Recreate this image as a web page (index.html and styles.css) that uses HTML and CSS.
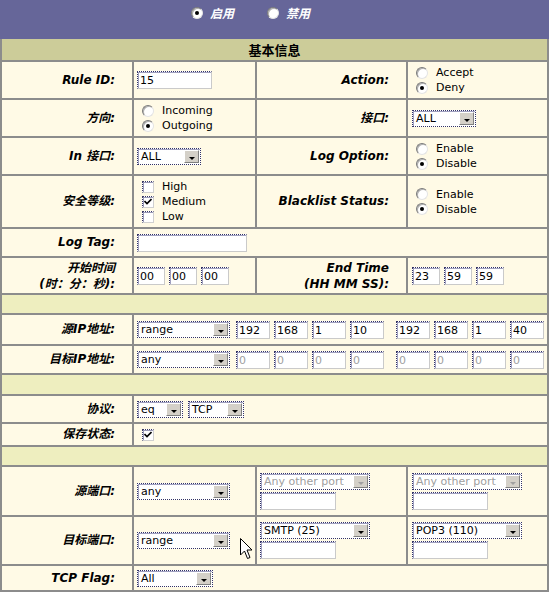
FILE: index.html
```html
<!DOCTYPE html>
<html lang="zh-CN">
<head>
<meta charset="utf-8">
<title>规则设置</title>
<link rel="stylesheet" href="styles.css">
</head>
<body>
<div class="topbar">
  <label class="top-opt"><span class="rd on"></span><span>启用</span></label>
  <label class="top-opt"><span class="rd"></span><span>禁用</span></label>
</div>
<table class="form">
  <colgroup><col class="c1"><col class="c2"><col class="c3"><col class="c4"></colgroup>
  <tr class="h-head"><th colspan="4">基本信息</th></tr>
  <tr class="h38">
    <td class="lbl">Rule ID:</td>
    <td class="val"><input class="inp w75" type="text" value="15"></td>
    <td class="lbl">Action:</td>
    <td class="val">
      <div class="opt"><span class="rd"></span>Accept</div>
      <div class="opt"><span class="rd on"></span>Deny</div>
    </td>
  </tr>
  <tr class="h38">
    <td class="lbl">方向:</td>
    <td class="val">
      <div class="opt"><span class="rd"></span>Incoming</div>
      <div class="opt"><span class="rd on"></span>Outgoing</div>
    </td>
    <td class="lbl">接口:</td>
    <td class="val"><span class="sel w64 ml"><span class="txt">ALL</span><span class="btn"></span></span></td>
  </tr>
  <tr class="h38">
    <td class="lbl">In 接口:</td>
    <td class="val"><span class="sel w64"><span class="txt">ALL</span><span class="btn"></span></span></td>
    <td class="lbl">Log Option:</td>
    <td class="val">
      <div class="opt"><span class="rd"></span>Enable</div>
      <div class="opt"><span class="rd on"></span>Disable</div>
    </td>
  </tr>
  <tr class="h53">
    <td class="lbl">安全等级:</td>
    <td class="val">
      <div class="opt"><span class="cb"></span>High</div>
      <div class="opt"><span class="cb"><svg viewBox="0 0 8 7" width="8" height="7"><path d="M0.5 3 L3 5.5 L7.5 1" fill="none" stroke="#000" stroke-width="1.6"/></svg></span>Medium</div>
      <div class="opt"><span class="cb"></span>Low</div>
    </td>
    <td class="lbl">Blacklist Status:</td>
    <td class="val">
      <div class="opt"><span class="rd"></span>Enable</div>
      <div class="opt"><span class="rd on"></span>Disable</div>
    </td>
  </tr>
  <tr class="h29">
    <td class="lbl">Log Tag:</td>
    <td class="val" colspan="3"><input class="inp w110" type="text" value=""></td>
  </tr>
  <tr class="h37">
    <td class="lbl two">开始时间<br>(时：分：秒):</td>
    <td class="val"><div class="row"><input class="inp w28" type="text" value="00"><input class="inp w28" type="text" value="00"><input class="inp w28" type="text" value="00"></div></td>
    <td class="lbl two">End Time<br>(HH MM SS):</td>
    <td class="val"><div class="row ml"><input class="inp w28" type="text" value="23"><input class="inp w28" type="text" value="59"><input class="inp w28" type="text" value="59"></div></td>
  </tr>
  <tr class="h20 sep"><td colspan="4"></td></tr>
  <tr class="h31">
    <td class="lbl">源IP地址:</td>
    <td class="val" colspan="3">
      <div class="row ip">
        <span class="sel w95"><span class="txt">range</span><span class="btn"></span></span>
        <div class="quad"><input class="inp w34" type="text" value="192"><input class="inp w34" type="text" value="168"><input class="inp w34" type="text" value="1"><input class="inp w34" type="text" value="10"></div>
        <div class="quad"><input class="inp w34" type="text" value="192"><input class="inp w34" type="text" value="168"><input class="inp w34" type="text" value="1"><input class="inp w34" type="text" value="40"></div>
      </div>
    </td>
  </tr>
  <tr class="h29">
    <td class="lbl">目标IP地址:</td>
    <td class="val" colspan="3">
      <div class="row ip">
        <span class="sel w95"><span class="txt">any</span><span class="btn"></span></span>
        <div class="quad"><input class="inp w34" type="text" value="0" disabled><input class="inp w34" type="text" value="0" disabled><input class="inp w34" type="text" value="0" disabled><input class="inp w34" type="text" value="0" disabled></div>
        <div class="quad"><input class="inp w34" type="text" value="0" disabled><input class="inp w34" type="text" value="0" disabled><input class="inp w34" type="text" value="0" disabled><input class="inp w34" type="text" value="0" disabled></div>
      </div>
    </td>
  </tr>
  <tr class="h21 sep"><td colspan="4"></td></tr>
  <tr class="h28">
    <td class="lbl">协议:</td>
    <td class="val" colspan="3">
      <div class="row proto">
        <span class="sel w46"><span class="txt">eq</span><span class="btn"></span></span>
        <span class="sel w56"><span class="txt">TCP</span><span class="btn"></span></span>
      </div>
    </td>
  </tr>
  <tr class="h23">
    <td class="lbl">保存状态:</td>
    <td class="val" colspan="3"><div class="opt"><span class="cb"><svg viewBox="0 0 8 7" width="8" height="7"><path d="M0.5 3 L3 5.5 L7.5 1" fill="none" stroke="#000" stroke-width="1.6"/></svg></span></div></td>
  </tr>
  <tr class="h20 sep"><td colspan="4"></td></tr>
  <tr class="h50">
    <td class="lbl">源端口:</td>
    <td class="val"><span class="sel w93"><span class="txt">any</span><span class="btn"></span></span></td>
    <td class="val">
      <div class="stack">
        <span class="sel w110 dis"><span class="txt">Any other port</span><span class="btn"></span></span>
        <input class="inp w76" type="text" value="">
      </div>
    </td>
    <td class="val">
      <div class="stack ml">
        <span class="sel w110 dis"><span class="txt">Any other port</span><span class="btn"></span></span>
        <input class="inp w76" type="text" value="">
      </div>
    </td>
  </tr>
  <tr class="h49">
    <td class="lbl">目标端口:</td>
    <td class="val"><span class="sel w93"><span class="txt">range</span><span class="btn"></span></span></td>
    <td class="val">
      <div class="stack">
        <span class="sel w110"><span class="txt">SMTP (25)</span><span class="btn"></span></span>
        <input class="inp w76" type="text" value="">
      </div>
    </td>
    <td class="val">
      <div class="stack ml">
        <span class="sel w110"><span class="txt">POP3 (110)</span><span class="btn"></span></span>
        <input class="inp w76" type="text" value="">
      </div>
    </td>
  </tr>
  <tr class="h26">
    <td class="lbl">TCP Flag:</td>
    <td class="val" colspan="3"><span class="sel w76"><span class="txt">All</span><span class="btn"></span></span></td>
  </tr>
</table>
<svg class="cursor" width="13" height="22" viewBox="0 0 13 22"><path d="M0.5 0.5 L0.5 17 L4.5 13 L7.5 20.5 L10 19.5 L7 12 L12 12 Z" fill="#fff" stroke="#000" stroke-width="1"/></svg>
</body>
</html>
```

FILE: styles.css
```css
* { box-sizing: border-box; }
html, body { margin: 0; padding: 0; }
body {
  position: relative;
  width: 549px;
  background: #fff;
  color: #000;
  font-family: "DejaVu Sans", Verdana, "Noto Sans CJK SC", sans-serif;
  font-size: 11px;
}

/* top bar */
.topbar {
  height: 39px;
  background: #666699;
  display: flex;
  align-items: flex-start;
  gap: 33px;
  padding: 6px 0 0 191px;
}
.top-opt {
  display: flex;
  align-items: center;
  gap: 7px;
  color: #fff;
  font: italic bold 12px "Noto Sans CJK SC", sans-serif;
  line-height: 14px;
}

/* table */
.form {
  width: 549px;
  table-layout: fixed;
  border-collapse: separate;
  border-spacing: 0;
  border-left: 2px solid #8c8c8c;
}
.c1 { width: 132px; }
.c2 { width: 123px; }
.c3 { width: 151px; }
.c4 { width: 141px; }

.form th, .form td {
  border-right: 2px solid #8c8c8c;
  border-bottom: 2px solid #8c8c8c;
  background: #fffae6;
  padding: 0 3px;
  vertical-align: middle;
}
.form th {
  background: #cccc99;
  font: bold 13px "Noto Sans CJK SC", sans-serif;
  text-align: center;
  line-height: 15px;
}
.form tr.sep td { background: #eeeebf; }

.h-head > * { height: 23px; }
.h38 > * { height: 38px; }
.h53 > * { height: 53px; }
.h30 > * { height: 30px; }
.h37 > * { height: 37px; }
.h20 > * { height: 20px; }
.h21 > * { height: 21px; }
.h31 > * { height: 31px; }
.h29 > * { height: 29px; }
.h28 > * { height: 28px; }
.h23 > * { height: 23px; }
.h50 > * { height: 50px; }
.h49 > * { height: 49px; }
.h26 > * { height: 26px; }

.form td.lbl {
  text-align: right;
  padding-right: 17px;
  font-family: "DejaVu Sans", Verdana, "Noto Sans CJK SC", sans-serif;
  font-size: 12px;
  font-weight: bold;
  font-style: italic;
  line-height: 15px;
  white-space: nowrap;
}
.form td.lbl.two { line-height: 16px; }

.ml { margin-left: 1px; }

/* options */
.opt {
  display: flex;
  align-items: center;
  height: 15px;
  padding-left: 5px;
  line-height: 15px;
}
.rd {
  position: relative;
  display: inline-block;
  flex: none;
  width: 12px;
  height: 12px;
  border-radius: 50%;
  background: #fff;
  border: 1px solid;
  border-color: #7a7a7a #e4e4e4 #e4e4e4 #7a7a7a;
  box-shadow: inset 1px 1px 0 #b0b0b0;
}
.opt .rd { margin-right: 8px; }
.rd.on::after {
  content: "";
  position: absolute;
  left: 3px;
  top: 3px;
  width: 4px;
  height: 4px;
  border-radius: 50%;
  background: #000;
}
.cb {
  display: inline-flex;
  align-items: center;
  justify-content: center;
  flex: none;
  width: 12px;
  height: 12px;
  margin-right: 8px;
  background: #fff;
  border: 1px solid;
  border-style: dotted solid solid dotted;
  border-color: #3a3a66 #d0d0d0 #d0d0d0 #3a3a66;
  box-shadow: inset 1px 1px 0 #9a9ab8;
}
.cb svg { display: block; }

/* inputs */
.inp {
  display: block;
  height: 18px;
  margin: 0;
  padding: 1px 2px 0;
  background: #fff;
  color: #000;
  font: 11px "DejaVu Sans", Verdana, sans-serif;
  border: 1px solid;
  border-style: dotted solid solid dotted;
  border-color: #333366 #cacaca #cacaca #333366;
  box-shadow: inset 1px 1px 0 #a0a0c0;
  outline: none;
  border-radius: 0;
}
.inp:disabled { color: #a0a0a0; background: #fff; }
.w28 { width: 28px; }
.w34 { width: 34px; }
.w46 { width: 46px; }
.w56 { width: 56px; }
.w64 { width: 64px; }
.w75 { width: 75px; }
.w76 { width: 76px; }
.w93 { width: 93px; }
.w95 { width: 95px; }
.w110 { width: 110px; }

/* select look-alike */
.sel {
  display: inline-flex;
  align-items: stretch;
  height: 17px;
  vertical-align: middle;
  background: #fff;
  border: 1px dotted #333366;
  box-shadow: inset 1px 1px 0 #a0a0c0;
  font: 11px "DejaVu Sans", Verdana, sans-serif;
  line-height: 15px;
}
.sel .txt {
  flex: 1;
  min-width: 0;
  padding-left: 3px;
  white-space: nowrap;
  overflow: hidden;
}
.sel .btn {
  position: relative;
  flex: none;
  width: 15px;
  margin: 1px;
  background: #d4d0c8;
  border: 1px solid;
  border-color: #ffffff #808080 #808080 #ffffff;
}
.sel .btn::after {
  content: "";
  position: absolute;
  left: 4px;
  top: 6px;
  border-left: 3px solid transparent;
  border-right: 3px solid transparent;
  border-top: 3px solid #000;
}
.sel.dis { color: #a0a0a0; }
.sel.dis .btn::after { border-top-color: #a0a0a0; }

/* rows of controls */
.row { display: flex; align-items: center; gap: 4px; }
.row.ip { gap: 6px; }
.quad { display: flex; gap: 4px; }
.quad + .quad { margin-left: 6px; }
.row.proto { gap: 5px; }
.stack { display: flex; flex-direction: column; gap: 2px; }

.cursor {
  position: absolute;
  left: 240px;
  top: 538px;
}
```
